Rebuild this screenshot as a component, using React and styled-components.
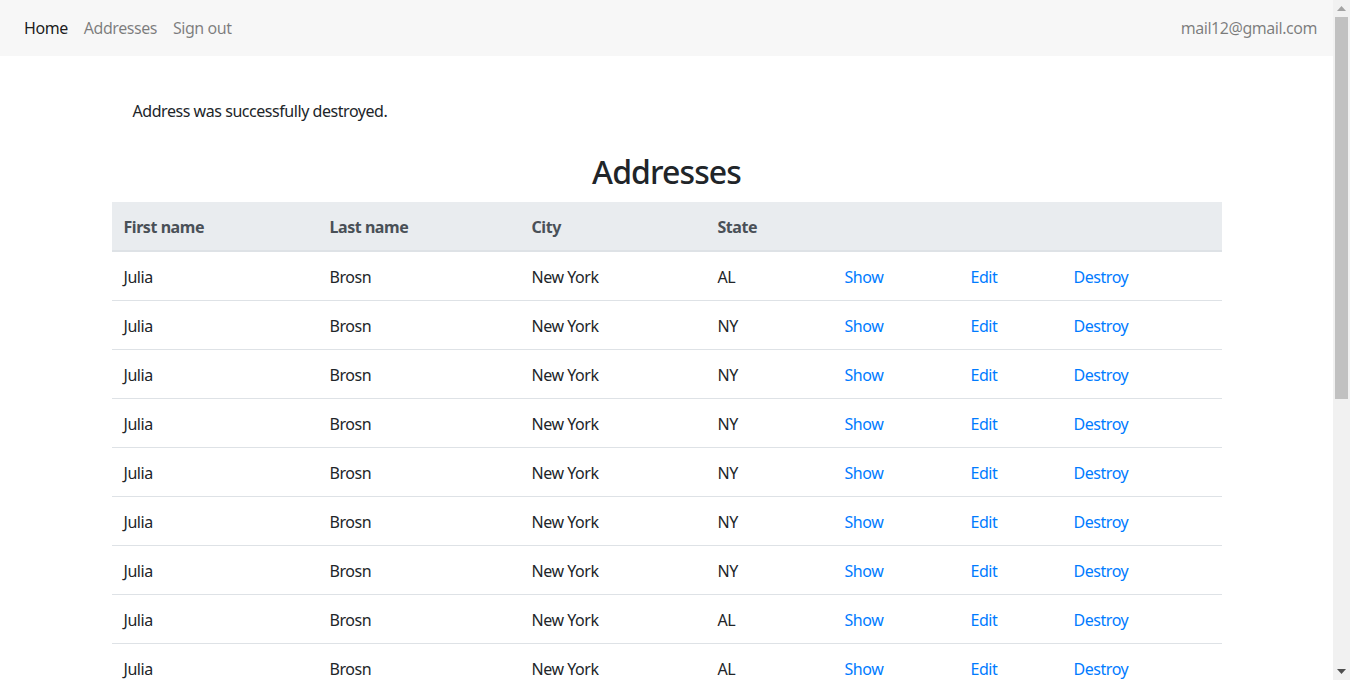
import React from "react";
import styled, { createGlobalStyle } from "styled-components";

const GlobalStyle = createGlobalStyle`
  html, body {
    margin: 0;
    height: 100%;
    overflow: hidden;
  }
  body {
    font-family: "Noto Sans", "Open Sans", sans-serif;
    font-size: 16px;
    line-height: 1.5;
    letter-spacing: -0.45px;
    color: #212529;
    background: #fff;
  }
  #root { height: 100%; }
`;

const addresses = [
  "AL", "NY", "NY", "NY", "NY", "NY", "NY", "AL", "AL",
  "NY", "NY", "AL", "NY", "NY", "AL", "NY", "NY", "AL",
].map((state, i) => ({
  id: i + 1,
  firstName: "Julia",
  lastName: "Brosn",
  city: "New York",
  state,
}));

function App() {
  return (
    <>
      <GlobalStyle />
      <Shell>
        <Page>
          <Navbar>
            <NavLinks>
              <NavLink $active href="#">Home</NavLink>
              <NavLink href="#">Addresses</NavLink>
              <NavLink href="#">Sign out</NavLink>
            </NavLinks>
            <UserEmail>mail12@gmail.com</UserEmail>
          </Navbar>

          <Container>
            <Notice>Address was successfully destroyed.</Notice>
            <Title>Addresses</Title>

            <Table>
              <colgroup>
                <col width="206" />
                <col width="202" />
                <col width="186" />
                <col width="127" />
                <col width="126" />
                <col width="103" />
                <col />
              </colgroup>
              <thead>
                <tr>
                  <Th>First name</Th>
                  <Th>Last name</Th>
                  <Th>City</Th>
                  <Th>State</Th>
                  <Th />
                  <Th />
                  <Th />
                </tr>
              </thead>
              <tbody>
                {addresses.map((a) => (
                  <tr key={a.id}>
                    <Td>{a.firstName}</Td>
                    <Td>{a.lastName}</Td>
                    <Td>{a.city}</Td>
                    <Td>{a.state}</Td>
                    <Td><Link href="#">Show</Link></Td>
                    <Td><Link href="#">Edit</Link></Td>
                    <Td><Link href="#">Destroy</Link></Td>
                  </tr>
                ))}
              </tbody>
            </Table>
          </Container>
        </Page>

        <Scrollbar>
          <ScrollButton>
            <svg width="9" height="5" viewBox="0 0 9 5">
              <path d="M0 5 L4.5 0 L9 5 Z" fill="#a3a3a3" />
            </svg>
          </ScrollButton>
          <ScrollTrack>
            <ScrollThumb />
          </ScrollTrack>
          <ScrollButton>
            <svg width="9" height="5" viewBox="0 0 9 5">
              <path d="M0 0 L9 0 L4.5 5 Z" fill="#505050" />
            </svg>
          </ScrollButton>
        </Scrollbar>
      </Shell>
    </>
  );
}

const Shell = styled.div`
  display: flex;
  height: 100vh;
`;

const Page = styled.div`
  flex: 1;
  min-width: 0;
  overflow: hidden;
`;

const Scrollbar = styled.div`
  width: 17px;
  flex-shrink: 0;
  display: flex;
  flex-direction: column;
  background: #f1f1f1;
`;

const ScrollButton = styled.div`
  height: 17px;
  display: flex;
  align-items: center;
  justify-content: center;
`;

const ScrollTrack = styled.div`
  flex: 1;
  padding: 0 2px;
`;

const ScrollThumb = styled.div`
  height: 382px;
  background: #c1c1c1;
`;

const Navbar = styled.nav`
  display: flex;
  align-items: center;
  justify-content: space-between;
  height: 56px;
  padding: 0 16px;
  background: #f7f7f7;
  box-sizing: border-box;
`;

const NavLinks = styled.div`
  display: flex;
`;

const NavLink = styled.a`
  padding: 8px;
  text-decoration: none;
  color: ${(p) => (p.$active ? "rgba(0, 0, 0, 0.9)" : "rgba(0, 0, 0, 0.5)")};
`;

const UserEmail = styled.span`
  color: rgba(0, 0, 0, 0.5);
`;

const Container = styled.main`
  max-width: 1110px;
  margin: 0 auto;
  padding: 43px 15px 0;
`;

const Notice = styled.p`
  margin: 0;
  padding: 0 21px;
`;

const Title = styled.h2`
  margin: 30px 0 11px;
  text-align: center;
  font-size: 32px;
  font-weight: 500;
  line-height: 1.2;
  letter-spacing: -0.9px;
`;

const Table = styled.table`
  width: 100%;
  border-collapse: collapse;
  margin-bottom: 16px;
  table-layout: fixed;
`;

const Th = styled.th`
  padding: 13px 12px 11px;
  text-align: left;
  font-weight: 700;
  color: #495057;
  background: #e9ecef;
  border-bottom: 2px solid #dee2e6;
`;

const Td = styled.td`
  padding: 13px 12px 11px;
  border-top: 1px solid #dee2e6;
`;

const Link = styled.a`
  color: #007bff;
  text-decoration: none;
`;

export default App;
